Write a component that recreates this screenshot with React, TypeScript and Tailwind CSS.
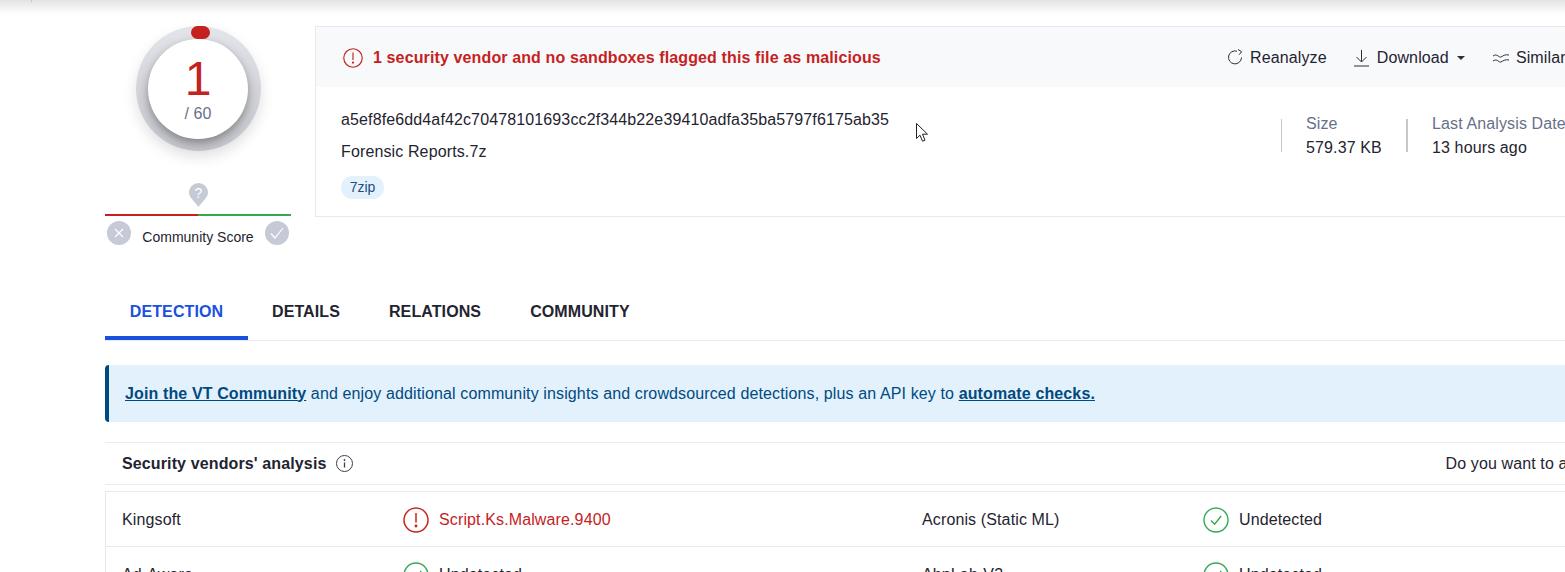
import React from "react";

const RED = "#c5221f";
const GREEN = "#34a853";

function AlertIcon({ size }: { size: number }) {
  return (
    <svg width={size} height={size} viewBox="0 0 26 26" fill="none" stroke={RED} strokeWidth="1.5">
      <circle cx="13" cy="13" r="12" />
      <path d="M13 6v9.5" />
      <circle cx="13" cy="19" r="0.7" fill={RED} />
    </svg>
  );
}

function CheckIcon() {
  return (
    <svg width="26" height="26" viewBox="0 0 26 26" fill="none" stroke={GREEN} strokeWidth="1.4">
      <circle cx="13" cy="13" r="12" />
      <path d="M8 13.500l3.600 3.800L18.200 9" />
    </svg>
  );
}

function VendorCell({ name, result, flagged }: { name: string; result: string; flagged?: boolean }) {
  return (
    <div className="flex items-center w-[800px] shrink-0">
      <span className="w-[281px] shrink-0">{name}</span>
      <span className="w-[36px] shrink-0 flex">{flagged ? <AlertIcon size={26} /> : <CheckIcon />}</span>
      <span className={flagged ? "text-[#c5221f]" : ""}>{result}</span>
    </div>
  );
}

export default function App() {
  return (
    <div className="w-[1565px] h-[572px] overflow-hidden bg-white relative font-['Liberation_Sans',Arial,sans-serif] text-[16px] tracking-[0.125px] text-[#1f2430]">
      {/* browser chrome shadow */}
      <div className="absolute top-0 left-0 right-0 h-[14px] bg-gradient-to-b from-[#e3e3e3] to-white" />
      <div className="absolute top-0 left-[31px] w-px h-[2px] bg-[#c8c8c8]" />

      <div className="relative pl-[105px] pt-[26px]">
        {/* Summary */}
        <div className="flex">
          <div className="w-[186px] shrink-0 flex flex-col items-center">
            <div className="relative w-[125px] h-[125px] rounded-full bg-gradient-to-b from-[#e4e5ea] to-[#c4c5ca] flex items-center justify-center shadow-[0_6px_14px_rgba(0,0,0,0.12)]">
              <div className="absolute top-[0px] left-[55px] w-[19px] h-[13px] rounded-full bg-[#c5221f]" />
              <div className="w-[100px] h-[100px] rounded-full bg-white flex flex-col items-center shadow-[0_4px_10px_rgba(0,0,0,0.35)]">
                <span className="text-[48px] leading-[48px] mt-[16px] tracking-normal text-[#c5221f]">1</span>
                <span className="text-[16px] leading-[20px] mt-[1px] text-[#677089]">/ 60</span>
              </div>
            </div>
            <div className="mt-[32px] flex">
              <svg width="19" height="24" viewBox="0 0 19 24">
                <path d="M9.500 24C5 18 0 14 0 9.500a9.500 9.500 0 0 1 19 0C19 14 14 18 9.500 24z" fill="#c6cad6" />
                <text x="9.500" y="14.500" textAnchor="middle" fontSize="14" fill="#fff" fontFamily="Liberation Sans">?</text>
              </svg>
            </div>
            <div className="w-full flex h-[2px] mt-[7px]">
              <div className="w-1/2 bg-[#c5221f]" />
              <div className="w-1/2 bg-[#34a853]" />
            </div>
            <div className="w-full flex items-start justify-between px-[2px] mt-[5px]">
              <span className="w-[24px] h-[24px] rounded-full bg-[#c6cad6] flex items-center justify-center">
                <svg width="10" height="10" viewBox="0 0 10 10" stroke="#fff" strokeWidth="1.2"><path d="M1 1l8 8M9 1l-8 8" /></svg>
              </span>
              <span className="text-[14px] leading-[20px] mt-[6px] tracking-normal">Community Score</span>
              <span className="w-[24px] h-[24px] rounded-full bg-[#c6cad6] flex items-center justify-center">
                <svg width="14" height="12" viewBox="0 0 14 12" fill="none" stroke="#fff" strokeWidth="1.2"><path d="M1 6.500l4 4.500 8-10" /></svg>
              </span>
            </div>
          </div>

          {/* File card */}
          <div className="ml-[24px] w-[1300px] shrink-0 h-[191px] border border-[#e6e9f0]">
            <div className="h-[60px] bg-[#f8f9fb] flex items-center pl-[27px] leading-[22px] pt-[1px]">
              <AlertIcon size={20} />
              <span className="ml-[10px] font-bold text-[#c5221f] w-[854px] whitespace-nowrap">1 security vendor and no sandboxes flagged this file as malicious</span>
              <svg className="mr-[6px]" width="17" height="17" viewBox="0 0 17 17" fill="none" stroke="#2a2f3a" strokeWidth="1">
                <path d="M14.500 8.500A6.500 6.500 0 1 1 10 2.200" />
                <path d="M11 .5l3.600 2.200-2.400 3" />
              </svg>
              <span>Reanalyze</span>
              <svg className="ml-[26px] mr-[7px]" width="17" height="18" viewBox="0 0 17 18" fill="none" stroke="#2a2f3a" strokeWidth="1">
                <path d="M8.500 1v11.500M3.500 8l5 5 5-5M1 17h15" />
              </svg>
              <span>Download</span>
              <span className="ml-[8px] w-0 h-0 border-x-[4px] border-x-transparent border-t-[4px] border-t-[#2a2f3a]" />
              <svg className="ml-[27px] mr-[6px]" width="18" height="12" viewBox="0 0 18 12" fill="none" stroke="#2a2f3a" strokeWidth="1">
                <path d="M1 4c4-3 6 2 8 1s4-3 8-2M1 9c4-3 6 2 8 1s4-3 8-2" />
              </svg>
              <span>Similar</span>
            </div>
            <div className="flex pl-[25px]">
              <div className="w-[940px] shrink-0">
                <div className="mt-[22px] leading-[22px]">a5ef8fe6dd4af42c70478101693cc2f344b22e39410adfa35ba5797f6175ab35</div>
                <div className="mt-[10px] leading-[22px]">Forensic Reports.7z</div>
                <div className="mt-[13px] w-[43px] h-[23px] rounded-full bg-[#e3f1fd] text-[14px] tracking-normal leading-[23px] text-center text-[#1c4f80]">7zip</div>
              </div>
              <div className="flex mt-[25px] h-[52px] items-start">
                <div className="w-px h-[33px] mt-[7px] bg-[#c8c8c8]" />
                <div className="pl-[24px] w-[124px] leading-[24px]">
                  <div className="text-[#677089]">Size</div>
                  <div>579.37 KB</div>
                </div>
                <div className="w-[2px] h-[33px] mt-[7px] bg-[#c8c8c8]" />
                <div className="pl-[24px] leading-[24px] whitespace-nowrap">
                  <div className="text-[#677089]">Last Analysis Date</div>
                  <div>13 hours ago</div>
                </div>
              </div>
            </div>
          </div>
        </div>

        {/* Tabs */}
        <div className="mt-[36px] h-[58px] border-b border-[#e6e9f0] flex font-bold tracking-[0.1px] leading-[20px]">
          <div className="w-[143px] h-[57px] border-b-[4px] border-[#1a50de] text-[#1a50de] flex justify-center pt-[19px]">DETECTION</div>
          <div className="ml-[24px] pt-[19px]">DETAILS</div>
          <div className="ml-[49px] pt-[19px]">RELATIONS</div>
          <div className="ml-[49px] pt-[19px]">COMMUNITY</div>
        </div>

        {/* Community banner */}
        <div className="mt-[24px] h-[57px] bg-[#e3f1fd] border-l-[4px] border-[#004a80] rounded-l-[4px] pl-[16px] flex items-center text-[#004a80] whitespace-pre">
          <a className="font-bold underline">Join the VT Community</a>
          <span> and enjoy additional community insights and crowdsourced detections, plus an API key to </span>
          <a className="font-bold underline">automate checks.</a>
        </div>

        {/* Vendors */}
        <div className="mt-[20px] h-[43px] border-y border-[#e9ebf0] flex items-center pl-[17px]">
          <span className="font-bold whitespace-nowrap shrink-0">Security vendors' analysis</span>
          <svg className="ml-[10px] shrink-0" width="17" height="17" viewBox="0 0 17 17" fill="none" stroke="#3a3f4a" strokeWidth="1">
            <circle cx="8.500" cy="8.500" r="8" />
            <path d="M8.500 7.500v5" strokeWidth="1.300" />
            <circle cx="8.500" cy="5" r="0.600" fill="#3a3f4a" />
          </svg>
          <span className="ml-[1092px] whitespace-nowrap shrink-0">Do you want to automate checks?</span>
        </div>
        <div className="mt-[6px] border-t border-l border-[#e6e9f0]">
          <div className="h-[55px] border-b border-[#e6e9f0] flex items-center pl-[16px] pt-[1px]">
            <VendorCell name="Kingsoft" result="Script.Ks.Malware.9400" flagged />
            <VendorCell name="Acronis (Static ML)" result="Undetected" />
          </div>
          <div className="h-[55px] flex items-center pl-[16px]">
            <VendorCell name="Ad-Aware" result="Undetected" />
            <VendorCell name="AhnLab-V3" result="Undetected" />
          </div>
        </div>
      </div>

      {/* mouse pointer captured in the screenshot */}
      <svg className="absolute left-[916px] top-[123px]" width="14" height="20" viewBox="0 0 14 20" fill="#fff" stroke="#222" strokeWidth="1">
        <path d="M.5.5v15l3.500-3.300 2.500 6 2.500-1-2.500-6h5z" />
      </svg>
    </div>
  );
}
